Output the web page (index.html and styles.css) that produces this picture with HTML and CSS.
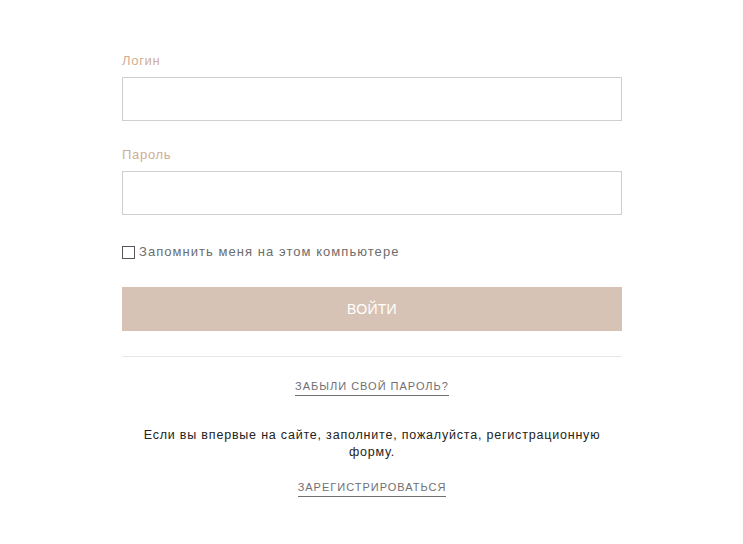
FILE: index.html
```html
<!DOCTYPE html>
<html lang="ru">
<head>
<meta charset="utf-8">
<link rel="stylesheet" href="styles.css">
</head>
<body>
<div class="page">
  <form class="form">
    <label class="label">Логин</label>
    <div class="input"></div>
    <label class="label label-2">Пароль</label>
    <div class="input"></div>
    <div class="remember"><span class="box"></span><span>Запомнить меня на этом компьютере</span></div>
    <div class="btn">ВОЙТИ</div>
    <div class="divider"></div>
    <div class="center"><a class="link">ЗАБЫЛИ СВОЙ ПАРОЛЬ?</a></div>
    <p class="note">Если вы впервые на сайте, заполните, пожалуйста, регистрационную форму.</p>
    <div class="center"><a class="link">ЗАРЕГИСТРИРОВАТЬСЯ</a></div>
  </form>
</div>
</body>
</html>
```
FILE: styles.css
```css
* { box-sizing: border-box; }
html, body { margin: 0; padding: 0; background: #fff; }
body { font-family: "Liberation Sans", Arial, sans-serif; }
.page { width: 743px; padding: 53px 0 0 122px; }
.form { width: 500px; display: flex; flex-direction: column; }
.label { display: block; font-size: 13px; color: #d0ae94; letter-spacing: 0.7px; line-height: 16px; margin-bottom: 8px; }
.label-2 { margin-top: 26px; }
.input { height: 44px; border: 1px solid #cfcfcf; background: #fff; }
.remember { margin-top: 29px; display: flex; align-items: center; font-size: 13px; color: #6d6d6d; letter-spacing: 1.05px; line-height: 16px; }
.box { width: 13px; height: 13px; border: 1px solid #555; margin-right: 4px; }
.btn { margin-top: 27px; height: 44px; background: #d7c3b5; color: #fff; font-size: 14px; display: flex; align-items: center; justify-content: center; letter-spacing: 0.3px; }
.divider { margin-top: 25px; height: 1px; background: #e6e6e6; }
.center { text-align: center; }
.link { display: inline-block; margin-top: 22px; font-size: 11px; letter-spacing: 1px; color: #6f6f74; line-height: 14px; padding-bottom: 2px; border-bottom: 1px solid #6f6f74; }
.note { margin: 31px 0 0; font-size: 12.5px; color: #222; text-align: center; line-height: 17px; letter-spacing: 0.8px; padding: 0 12px; }
.note + .center .link { margin-top: 19px; }
```
